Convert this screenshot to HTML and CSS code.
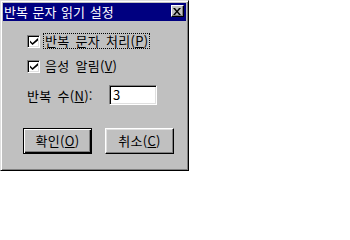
FILE: index.html
```html
<!DOCTYPE html>
<html lang="ko">
<head>
<meta charset="utf-8">
<link rel="stylesheet" href="styles.css">
</head>
<body>
<div class="dialog">
  <div class="titlebar">
    <span class="title">반복 문자 읽기 설정</span>
    <span class="close"><svg width="8" height="7" viewBox="0 0 8 7"><path d="M0 0h2l2 2.5L6 0h2L5 3.5 8 7H6L4 4.5 2 7H0l3-3.5z" fill="#000"/></svg></span>
  </div>
  <div class="content">
    <div class="row check-row">
      <span class="checkbox"><svg width="8" height="7" viewBox="0 0 8 7"><path d="M0 2.5l2.5 2.5L8 0v2.5L2.5 7 0 4.5z" fill="#000"/></svg></span>
      <span class="label focus">반복 문자 처리(<u>P</u>)</span>
    </div>
    <div class="row check-row">
      <span class="checkbox"><svg width="8" height="7" viewBox="0 0 8 7"><path d="M0 2.5l2.5 2.5L8 0v2.5L2.5 7 0 4.5z" fill="#000"/></svg></span>
      <span class="label">음성 알림(<u>V</u>)</span>
    </div>
    <div class="row field-row">
      <span class="field-label">반복 수(<u>N</u>):</span>
      <span class="input">3</span>
    </div>
    <div class="buttons">
      <span class="button default"><span class="btn-inner">확인(<u>O</u>)</span></span>
      <span class="button"><span class="btn-inner">취소(<u>C</u>)</span></span>
    </div>
  </div>
</div>
</body>
</html>
```

FILE: styles.css
```css
html, body {
  margin: 0;
  padding: 0;
  background: #fff;
}
body {
  font-family: "Noto Sans CJK KR", "Noto Sans", sans-serif;
  font-size: 13px;
  color: #000;
}
.dialog {
  width: 189px;
  height: 171px;
  box-sizing: border-box;
  background: #c0c0c0;
  border: 1px solid;
  border-color: #dfdfdf #000 #000 #dfdfdf;
  box-shadow: inset 1px 1px #fff, inset -1px -1px #808080;
  padding: 2px;
  display: flex;
  flex-direction: column;
}
.titlebar {
  height: 18px;
  background: #000080;
  color: #fff;
  display: flex;
  align-items: center;
  justify-content: space-between;
  flex-shrink: 0;
}
.title {
  font-size: 13px;
  line-height: 18px;
  padding-left: 1px;
  word-spacing: 1px;
}
.close {
  width: 13px;
  height: 12px;
  box-sizing: border-box;
  margin-right: 2px;
  margin-top: -2px;
  background: #c0c0c0;
  border: 1px solid;
  border-color: #fff #000 #000 #fff;
  box-shadow: inset -1px -1px #808080;
  display: flex;
  align-items: center;
  justify-content: center;
}
.close svg { display: block; margin-left: -1px; }
.content {
  padding: 12px 0 0 24px;
  display: flex;
  flex-direction: column;
}
.row {
  display: flex;
  align-items: center;
}
.label, .field-label, .btn-inner {
  word-spacing: 2px;
  letter-spacing: 0.3px;
}
.check-row {
  height: 16px;
  margin-bottom: 9px;
}
.check-row + .check-row { margin-bottom: 11px; }
.checkbox {
  width: 13px;
  height: 13px;
  box-sizing: border-box;
  background: #fff;
  border: 1px solid;
  border-color: #808080 #fff #fff #808080;
  box-shadow: inset 1px 1px #000, inset -1px -1px #dfdfdf;
  display: flex;
  align-items: center;
  justify-content: center;
  flex-shrink: 0;
}
.checkbox svg { display: block; margin-left: 1px; margin-top: 1px; }
.label {
  margin-left: 3px;
  padding: 0 1px;
  line-height: 14px;
  border: 1px dotted transparent;
  white-space: nowrap;
}
.label.focus {
  border-color: #000;
}
.field-row {
  height: 20px;
}
.field-label {
  width: 82px;
  flex-shrink: 0;
  white-space: nowrap;
}
.input {
  width: 48px;
  height: 20px;
  box-sizing: border-box;
  background: #fff;
  border: 1px solid;
  border-color: #808080 #fff #fff #808080;
  box-shadow: inset 1px 1px #000, inset -1px -1px #dfdfdf;
  padding-left: 3px;
  line-height: 18px;
}
.buttons {
  display: flex;
  gap: 13px;
  margin-left: -4px;
  margin-top: 23px;
}
.button {
  width: 69px;
  height: 26px;
  box-sizing: border-box;
  border: 1px solid;
  border-color: #fff #000 #000 #fff;
  box-shadow: inset -1px -1px #808080, inset 1px 1px #dfdfdf;
  display: flex;
  align-items: center;
  justify-content: center;
}
.button.default {
  border: 1px solid #000;
  box-shadow: inset 1px 1px #fff, inset -1px -1px #000, inset -2px -2px #808080;
}
.btn-inner {
  line-height: 14px;
  white-space: nowrap;
}
u {
  text-decoration: underline;
  text-underline-offset: 1px;
}
```
